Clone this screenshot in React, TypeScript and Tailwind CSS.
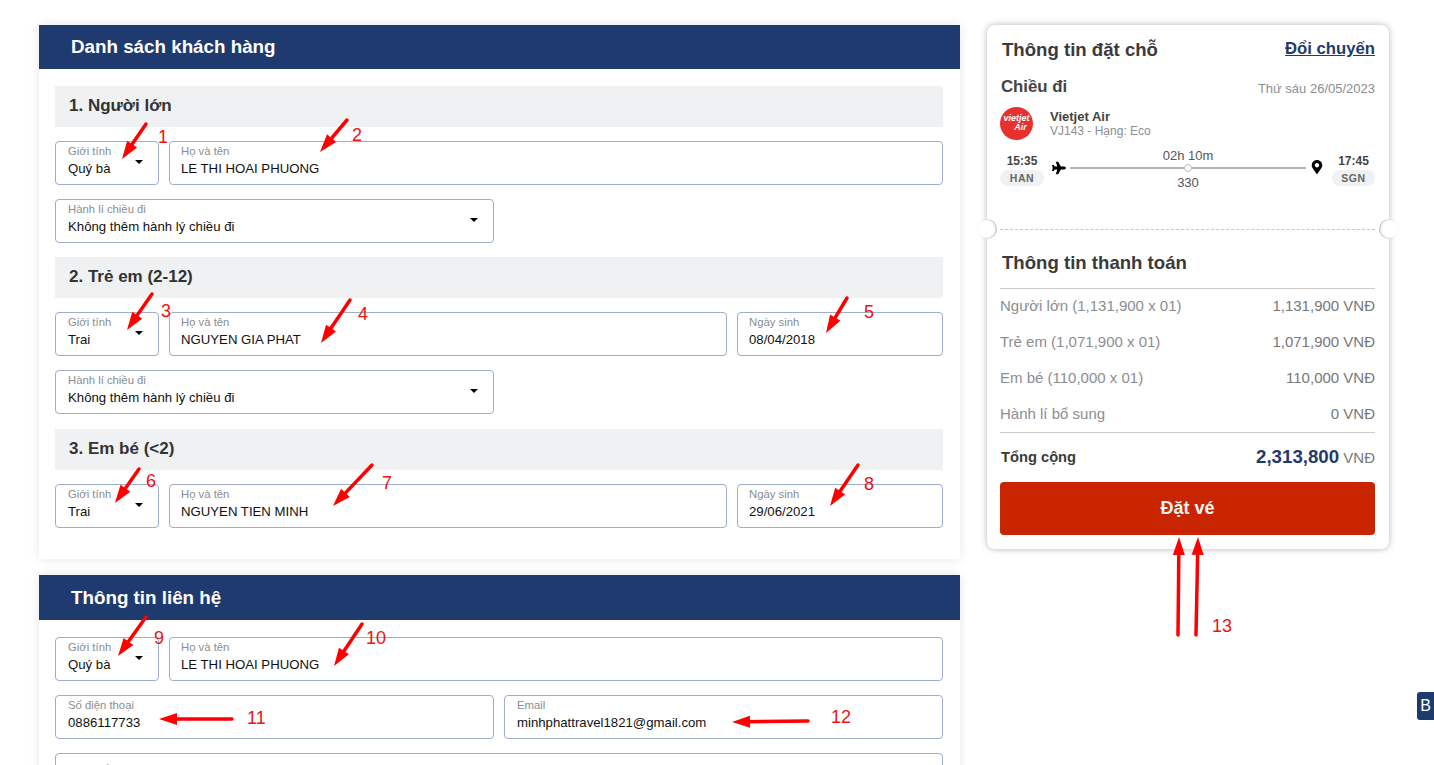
import { FaPlane, FaMapMarkerAlt } from "react-icons/fa"

const ARROWS = [
  [146, 124, 122, 159],
  [347, 120, 320, 152],
  [152, 294, 127, 330],
  [350, 300, 321, 343],
  [847, 298, 826, 333],
  [139, 469, 115, 503],
  [372, 465, 333, 506],
  [858, 465, 830, 506],
  [146, 617, 118, 656],
  [362, 624, 334, 666],
  [232, 719, 159, 719],
  [808, 721, 732, 722],
  [1178, 635, 1179, 537],
  [1196, 635, 1198, 537],
]

const NUMBERS = [
  { n: 1, left: "left-[158px]", top: "top-[127px]" },
  { n: 2, left: "left-[352px]", top: "top-[125px]" },
  { n: 3, left: "left-[161px]", top: "top-[301px]" },
  { n: 4, left: "left-[358px]", top: "top-[304px]" },
  { n: 5, left: "left-[864px]", top: "top-[302px]" },
  { n: 6, left: "left-[146px]", top: "top-[471px]" },
  { n: 7, left: "left-[382px]", top: "top-[473px]" },
  { n: 8, left: "left-[864px]", top: "top-[474px]" },
  { n: 9, left: "left-[154px]", top: "top-[628px]" },
  { n: 10, left: "left-[366px]", top: "top-[628px]" },
  { n: 11, left: "left-[247px]", top: "top-[708px]" },
  { n: 12, left: "left-[831px]", top: "top-[707px]" },
  { n: 13, left: "left-[1212px]", top: "top-[616px]" },
]

function arrowHead(x1: number, y1: number, x2: number, y2: number) {
  const len = Math.hypot(x2 - x1, y2 - y1)
  const ux = (x2 - x1) / len
  const uy = (y2 - y1) / len
  const bx = x2 - ux * 18
  const by = y2 - uy * 18
  return `${x2},${y2} ${bx - uy * 6},${by + ux * 6} ${bx + uy * 6},${by - ux * 6}`
}

function Caret() {
  return <span className="absolute right-[15px] top-[18px] h-0 w-0 border-x-[4px] border-t-[4px] border-x-transparent border-t-black" />
}

function Field({ label, value, select, className }: { label: string; value: string; select?: boolean; className: string }) {
  return (
    <div className={`relative h-[44px] rounded border border-[#9eadcb] bg-white ${className}`}>
      <div className="pt-[3px] text-[11.3px] leading-[13px] text-[#8a8d91]">{label}</div>
      <div className="pt-[2px] text-[13.2px] leading-[17px] text-[#111]">{value}</div>
      {select && <Caret />}
    </div>
  )
}

function SectionTitle({ children }: { children: string }) {
  return <div className="flex h-[41px] items-center bg-[#eff1f3] pb-[1px] pl-[14px] text-[17px] font-bold text-[#333]">{children}</div>
}

function PassengerRow({ gender, name, dob }: { gender: string; name: string; dob?: string }) {
  return (
    <div className="mt-[14px] flex gap-[10px]">
      <Field label="Giới tính" value={gender} select className="w-[104px] pl-[12px]" />
      <Field label="Họ và tên" value={name} className="flex-1 pl-[11px]" />
      {dob && <Field label="Ngày sinh" value={dob} className="w-[206px] pl-[11px]" />}
    </div>
  )
}

function Baggage() {
  return (
    <div className="mt-[14px]">
      <Field label="Hành lí chiều đi" value="Không thêm hành lý chiều đi" select className="w-[439px] pl-[12px]" />
    </div>
  )
}

function PriceRow({ label, value }: { label: string; value: string }) {
  return (
    <div className="flex h-[36px] items-center justify-between text-[15px] text-[#8b8e92]">
      <span>{label}</span>
      <span className="text-[#777]">{value}</span>
    </div>
  )
}

export default function App() {
  return (
    <div className="relative h-[765px] w-[1434px] overflow-hidden bg-white font-['Liberation_Sans',Arial,sans-serif]">
      <div className="flex gap-[27px] pl-[39px] pt-[25px]">
        {/* Left column */}
        <div className="w-[921px]">
          <div className="h-[534px] bg-white shadow-[0_0_10px_rgba(0,0,0,0.1)]">
            <div className="flex h-[44px] items-center bg-[#1f3a6e] pl-[32px] text-[18.8px] font-bold text-white">Danh sách khách hàng</div>
            <div className="pl-[16px] pr-[17px] pt-[17px]">
              <SectionTitle>1. Người lớn</SectionTitle>
              <PassengerRow gender="Quý bà" name="LE THI HOAI PHUONG" />
              <Baggage />
              <div className="mt-[14px]">
                <SectionTitle>2. Trẻ em (2-12)</SectionTitle>
              </div>
              <PassengerRow gender="Trai" name="NGUYEN GIA PHAT" dob="08/04/2018" />
              <Baggage />
              <div className="mt-[15px]">
                <SectionTitle>3. Em bé (&lt;2)</SectionTitle>
              </div>
              <PassengerRow gender="Trai" name="NGUYEN TIEN MINH" dob="29/06/2021" />
            </div>
          </div>

          <div className="mt-[16px] bg-white pb-[40px] shadow-[0_0_10px_rgba(0,0,0,0.1)]">
            <div className="flex h-[45px] items-center bg-[#1f3a6e] pl-[32px] pt-[1px] text-[18.8px] font-bold text-white">Thông tin liên hệ</div>
            <div className="pl-[16px] pr-[17px] pt-[3px]">
              <PassengerRow gender="Quý bà" name="LE THI HOAI PHUONG" />
              <div className="mt-[14px] flex gap-[10px]">
                <Field label="Số điện thoại" value="0886117733" className="flex-1 pl-[12px]" />
                <Field label="Email" value="minhphattravel1821@gmail.com" className="flex-1 pl-[12px]" />
              </div>
              <div className="mt-[14px]">
                <div className="h-[60px] rounded border border-[#9eadcb] bg-white pl-[12px] pt-[8px] text-[15px] leading-[17px] text-[#8a8d91]">Yêu cầu</div>
              </div>
            </div>
          </div>
        </div>

        {/* Booking card */}
        <div className="relative h-[524px] w-[402px] rounded-lg bg-white pl-[13px] pr-[14px] shadow-[0_0_6px_rgba(0,0,0,0.3)]">
          <div className="flex items-center justify-between pl-[2px] pt-[13px]">
            <span className="text-[18.6px] font-bold leading-[24px] text-[#3a3a3a]">Thông tin đặt chỗ</span>
            <span className="-mt-[2px] text-[16.7px] font-bold text-[#1f3a6e] underline">Đổi chuyến</span>
          </div>
          <div className="mt-[14px] flex items-center justify-between pl-[1px]">
            <span className="text-[16.8px] font-bold leading-[20px] text-[#444]">Chiều đi</span>
            <span className="pt-[3px] text-[13px] text-[#8b8e92]">Thứ sáu 26/05/2023</span>
          </div>
          <div className="mt-[8px] flex items-center gap-[17px]">
            <div className="flex h-[33px] w-[33px] flex-col items-center justify-center rounded-full bg-[#e8312f] text-[9px] font-bold italic leading-[9px] text-white">
              <span>vietjet</span>
              <span className="pl-[8px]">Air</span>
            </div>
            <div>
              <div className="text-[13px] font-bold leading-[15px] text-[#444]">Vietjet Air</div>
              <div className="text-[12px] leading-[14px] text-[#8b8e92]">VJ143 - Hạng: Eco</div>
            </div>
          </div>
          <div className="mt-[8px] flex items-start">
            <div className="flex w-[44px] flex-col items-center pt-[6px]">
              <span className="text-[12px] font-bold leading-[15px] text-[#444]">15:35</span>
              <span className="mt-[1px] w-[44px] rounded-full bg-[#eff1f3] text-center text-[10.5px] font-bold leading-[16px] tracking-wider text-[#666]">HAN</span>
            </div>
            <FaPlane className="ml-[8px] mt-[13px] h-[14px] w-[14px] text-black" />
            <div className="relative ml-[4px] mt-[19px] h-[2px] w-[236px] bg-[#b4b4b4]">
              <span className="absolute left-1/2 top-[-3px] h-[8px] w-[8px] -translate-x-1/2 rounded-full border border-[#bbb] bg-white" />
              <span className="absolute bottom-[6px] left-0 w-full text-center text-[13px] leading-[14px] text-[#555]">02h 10m</span>
              <span className="absolute left-0 top-[9px] w-full text-center text-[13px] leading-[14px] text-[#555]">330</span>
            </div>
            <FaMapMarkerAlt className="ml-[5px] mt-[12px] h-[14px] w-[12px] text-black" />
            <div className="ml-[9px] flex w-[43px] flex-col items-center pt-[6px]">
              <span className="text-[12px] font-bold leading-[15px] text-[#444]">17:45</span>
              <span className="mt-[1px] w-[43px] rounded-full bg-[#eff1f3] text-center text-[10.5px] font-bold leading-[16px] tracking-wider text-[#666]">SGN</span>
            </div>
          </div>

          {/* Ticket perforation */}
          <div className="mt-[43px] border-t border-dashed border-[#c8c8c8]" />
          <span className="absolute left-[-10px] top-[194px] h-[20px] w-[20px] rounded-full bg-white shadow-[inset_-1px_0_2px_rgba(0,0,0,0.3)]" />
          <span className="absolute right-[-10px] top-[194px] h-[20px] w-[20px] rounded-full bg-white shadow-[inset_1px_0_2px_rgba(0,0,0,0.3)]" />

          <div className="pl-[2px] pt-[21px] text-[18.6px] font-bold leading-[24px] text-[#3a3a3a]">Thông tin thanh toán</div>
          <div className="mt-[13px] h-[144px] border-t border-[#ccc]">
            <PriceRow label="Người lớn (1,131,900 x 01)" value="1,131,900 VNĐ" />
            <PriceRow label="Trẻ em (1,071,900 x 01)" value="1,071,900 VNĐ" />
            <PriceRow label="Em bé (110,000 x 01)" value="110,000 VNĐ" />
            <PriceRow label="Hành lí bổ sung" value="0 VNĐ" />
          </div>
          <div className="flex h-[50px] items-center justify-between border-t border-[#ccc] pl-[1px]">
            <span className="text-[14.7px] font-bold text-[#3a3a3a]">Tổng cộng</span>
            <span className="text-[15px] text-[#777]">
              <span className="text-[18.7px] font-bold text-[#1f3a6e]">2,313,800</span> VNĐ
            </span>
          </div>
          <div className="flex h-[53px] items-center justify-center rounded-sm bg-[#c92400] text-[18px] font-bold text-[#f3f3f3]">Đặt vé</div>
        </div>
      </div>

      {/* Floating tab on the right edge */}
      <div className="absolute left-[1417px] top-[692px] flex h-[28px] w-[17px] items-center justify-center rounded-l-[3px] bg-[#1f3a6e] text-[16px] text-white">B</div>

      {/* Red annotations over the form */}
      <svg className="pointer-events-none absolute left-0 top-0" width="1434" height="765">
        {ARROWS.map(([x1, y1, x2, y2]) => (
          <g key={`${x1}-${y1}`}>
            <line x1={x1} y1={y1} x2={x1 + (x2 - x1) * 0.85} y2={y1 + (y2 - y1) * 0.85} stroke="#ff0000" strokeWidth="3.5" strokeLinecap="round" />
            <polygon points={arrowHead(x1, y1, x2, y2)} fill="#ff0000" />
          </g>
        ))}
      </svg>
      {NUMBERS.map(({ n, left, top }) => (
        <span key={n} className={`absolute text-[18px] leading-[20px] text-[#f01010] ${left} ${top}`}>{n}</span>
      ))}
    </div>
  )
}
